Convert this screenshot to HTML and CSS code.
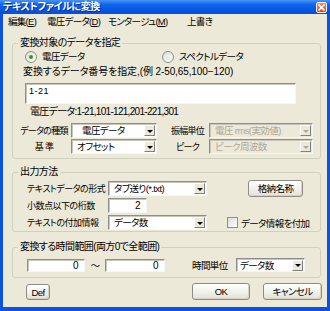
FILE: index.html
```html
<!DOCTYPE html>
<html lang="ja">
<head>
    <meta charset="UTF-8">
    <title>テキストファイルに変換</title>
    <link rel="stylesheet" href="styles.css">
</head>
<body>
    <div class="window">
        <div class="titlebar">
            <span class="title">テキストファイルに変換</span>
            <span class="close">
                <svg width="7" height="7" viewBox="0 0 7 7"><path d="M0.5 0.5L6.5 6.5M6.5 0.5L0.5 6.5" stroke="#fff" stroke-width="1.6"/></svg>
            </span>
        </div>
        <div class="client">
            <div class="menubar">
                <span class="menu m1">編集(<u>E</u>)</span>
                <span class="menu m2">電圧データ(<u>D</u>)</span>
                <span class="menu m3">モンタージュ(<u>M</u>)</span>
                <span class="menu">上書き</span>
            </div>

            <fieldset class="group g1">
                <legend>変換対象のデータを指定</legend>
                <div class="radio-row">
                    <span class="radio r1"><span class="dot on"></span>電圧データ</span>
                    <span class="radio"><span class="dot"></span>スペクトルデータ</span>
                </div>
                <div class="hint">変換するデータ番号を指定,(例 2-50,65,100−120)</div>
                <div class="textarea">1-21</div>
                <div class="summary">電圧データ:1-21,101-121,201-221,301</div>
                <div class="pair-row r-first">
                    <span class="lbl l-left">データの種類</span>
                    <div class="combo c-left"><span class="indent">電圧データ</span><i class="arrow"></i></div>
                    <span class="lbl l-right">振幅単位</span>
                    <div class="combo disabled c-right"><span>電圧 rms(実効値)</span><i class="arrow"></i></div>
                </div>
                <div class="pair-row">
                    <span class="lbl l-left">基 準</span>
                    <div class="combo c-left"><span>オフセット</span><i class="arrow"></i></div>
                    <span class="lbl l-right">ピーク</span>
                    <div class="combo disabled c-right"><span>ピーク周波数</span><i class="arrow"></i></div>
                </div>
            </fieldset>

            <fieldset class="group g2">
                <legend>出力方法</legend>
                <div class="out-row o1">
                    <span class="olbl">テキストデータの形式</span>
                    <div class="combo c-out"><span>タブ送り(*.txt)</span><i class="arrow"></i></div>
                    <button class="btn b-name">格納名称</button>
                </div>
                <div class="out-row o2">
                    <span class="olbl">小数点以下の桁数</span>
                    <div class="edit e-digits">2</div>
                </div>
                <div class="out-row o3">
                    <span class="olbl">テキストの付加情報</span>
                    <div class="combo c-out"><span>データ数</span><i class="arrow"></i></div>
                    <span class="check"><span class="box"></span>データ情報を付加</span>
                </div>
            </fieldset>

            <fieldset class="group g3">
                <legend>変換する時間範囲(両方0で全範囲)</legend>
                <div class="range-row">
                    <div class="edit e-from">0</div>
                    <span class="tilde">〜</span>
                    <div class="edit e-to">0</div>
                    <span class="tlbl">時間単位</span>
                    <div class="combo c-time"><span>データ数</span><i class="arrow"></i></div>
                </div>
            </fieldset>

            <div class="buttons">
                <button class="btn b-def">Def</button>
                <button class="btn b-ok">OK</button>
                <button class="btn b-cancel">キャンセル</button>
            </div>
        </div>
    </div>
</body>
</html>
```

FILE: styles.css
```css
html, body {
    margin: 0;
    padding: 0;
}
body {
    font-family: "Liberation Sans", "Noto Sans CJK JP", sans-serif;
    font-size: 9.5px;
    letter-spacing: -0.6px;
    font-feature-settings: "palt";
    white-space: nowrap;
    color: #000;
    background: #fff;
}
.window {
    width: 330px;
    height: 311px;
    background: #0b52dc;
    box-sizing: border-box;
    display: flex;
    flex-direction: column;
}
.titlebar {
    height: 14px;
    background: linear-gradient(#4a94f6 0%, #1565ea 30%, #0457e4 70%, #0a4fd4 100%);
    display: flex;
    align-items: center;
    justify-content: space-between;
    padding: 0 3px 0 3px;
}
.title {
    color: #fff;
    font-size: 10px;
    font-weight: bold;
    letter-spacing: -0.4px;
    line-height: 14px;
    text-shadow: 1px 1px 0 #0a2a8a;
}
.close {
    width: 11px;
    height: 11px;
    box-sizing: border-box;
    border: 1px solid #f4f4f4;
    border-radius: 2px;
    background: linear-gradient(#ee8d6c, #d9491f);
    display: flex;
    align-items: center;
    justify-content: center;
}
.close svg {
    display: block;
}
.client {
    flex: 1;
    margin: 0 3px 4px 3px;
    background: #ece9d8;
    display: flex;
    flex-direction: column;
}
.menubar {
    height: 16px;
    line-height: 16px;
    display: flex;
    padding-left: 5px;
    letter-spacing: -0.7px;
}
.menu u {
    text-decoration: underline;
}
.m1 { width: 39px; }
.m2 { width: 61px; }
.m3 { width: 79px; }

.group {
    margin: 0 6px 0 9px;
    padding: 0;
    border: 1px solid #d0d0bf;
    border-radius: 3px;
    min-width: 0;
}
.group legend {
    margin-left: 5px;
    padding: 0 2px;
    font-size: 10px;
    line-height: 12px;
    height: 12px;
}
.g1 { margin-top: 7px; padding-bottom: 4px; }
.g2 { margin-top: 7px; padding-bottom: 1px; }
.g3 { margin-top: 9px; padding-bottom: 5px; }

.radio-row {
    margin-top: 1px;
    height: 14px;
    display: flex;
    align-items: center;
    padding-left: 12px;
}
.radio {
    display: flex;
    align-items: center;
    line-height: 14px;
}
.r1 { width: 137px; }
.dot {
    width: 12px;
    height: 12px;
    box-sizing: border-box;
    border: 1px solid #8e8f8f;
    border-radius: 50%;
    background: linear-gradient(135deg, #dcdcd6, #ffffff);
    margin-right: 5px;
    position: relative;
}
.dot.on::after {
    content: "";
    position: absolute;
    left: 3px;
    top: 3px;
    width: 4px;
    height: 4px;
    border-radius: 50%;
    background: #21a121;
}
.hint {
    margin: 1px 0 0 10px;
    height: 14px;
    line-height: 14px;
    font-size: 10px;
    letter-spacing: -0.1px;
}
.textarea, .edit {
    background: #fff;
    box-sizing: border-box;
    border: 1px solid;
    border-color: #8e8e8e #f6f6f6 #f6f6f6 #8e8e8e;
    box-shadow: inset 1px 1px 0 #c8c6bc;
}
.textarea {
    margin: 4px 0 0 12px;
    width: 271px;
    height: 21px;
    font-size: 9px;
    letter-spacing: 0.5px;
    line-height: 12px;
    padding: 1px 0 0 3px;
}
.summary {
    margin: 1px 0 0 17px;
    height: 14px;
    line-height: 14px;
    font-size: 10px;
    letter-spacing: -0.7px;
}
.pair-row {
    margin-top: 1px;
    height: 15px;
    display: flex;
    align-items: center;
}
.r-first { margin-top: 4px; }
.lbl {
    text-align: center;
    font-size: 9px;
    letter-spacing: -0.7px;
}
.l-left { margin-left: 7px; width: 48px; margin-right: 3px; }
.l-right { margin-left: 9px; width: 43px; }

.combo {
    height: 15px;
    box-sizing: border-box;
    background: #fff;
    border: 1px solid;
    border-color: #8e8e8e #f6f6f6 #f6f6f6 #8e8e8e;
    box-shadow: inset 1px 1px 0 #c8c6bc;
    display: flex;
    align-items: center;
    justify-content: space-between;
    padding: 0 1px 0 5px;
    line-height: 13px;
    overflow: hidden;
}
.combo .indent {
    padding-left: 5px;
}
.combo.disabled {
    background: #ece9d8;
    color: #aca899;
}
.arrow {
    flex: none;
    width: 11px;
    height: 11px;
    box-sizing: border-box;
    background: #ece9d8;
    border: 1px solid;
    border-color: #fff #808080 #808080 #fff;
    display: flex;
    align-items: center;
    justify-content: center;
}
.arrow::after {
    content: "";
    border-left: 3px solid transparent;
    border-right: 3px solid transparent;
    border-top: 3px solid #000;
    margin-top: 1px;
}
.disabled .arrow::after {
    border-top-color: #aca899;
}
.c-left { width: 86px; }
.c-right { width: 104px; }

.out-row {
    display: flex;
    align-items: center;
    height: 15px;
}
.o1 { margin-top: 2px; height: 17px; }
.o2 { margin-top: 1px; }
.o3 { margin-top: 2px; }
.olbl {
    margin-left: 14px;
    width: 81px;
    font-size: 9px;
    letter-spacing: -0.5px;
}
.c-out { width: 99px; }
.edit {
    height: 15px;
    line-height: 13px;
    text-align: right;
    padding-right: 6px;
    font-size: 10px;
}
.e-digits { width: 39px; }
.check {
    display: flex;
    align-items: center;
    margin-left: 20px;
}
.box {
    width: 11px;
    height: 11px;
    box-sizing: border-box;
    border: 1px solid #8e8f8f;
    background: linear-gradient(135deg, #dcdcd6, #fff);
    margin-right: 3px;
}

.btn {
    font: inherit;
    letter-spacing: inherit;
    font-feature-settings: "palt";
    color: #000;
    height: 17px;
    padding: 0;
    box-sizing: border-box;
    border: 1px solid #8d8d86;
    border-radius: 3px;
    background: linear-gradient(#ffffff, #f0efe8 60%, #e2e0d6);
    box-shadow: inset -1px -1px 0 #d6d3c6;
    line-height: 15px;
}
.b-name { margin-left: 41px; width: 55px; }

.range-row {
    margin-top: 5px;
    height: 14px;
    display: flex;
    align-items: center;
}
.range-row .edit { height: 13px; line-height: 11px; }
.e-from { margin-left: 14px; width: 58px; }
.tilde { width: 20px; text-align: center; }
.e-to { width: 60px; }
.tlbl { margin-left: 27px; width: 44px; }
.c-time { width: 69px; height: 14px; padding-left: 3px; }

.buttons {
    margin-top: 5px;
    display: flex;
    align-items: center;
    height: 17px;
}
.b-def { margin-left: 23px; width: 24px; height: 16px; }
.b-ok { margin-left: 142px; width: 58px; }
.b-cancel { margin-left: 13px; width: 59px; }
```
